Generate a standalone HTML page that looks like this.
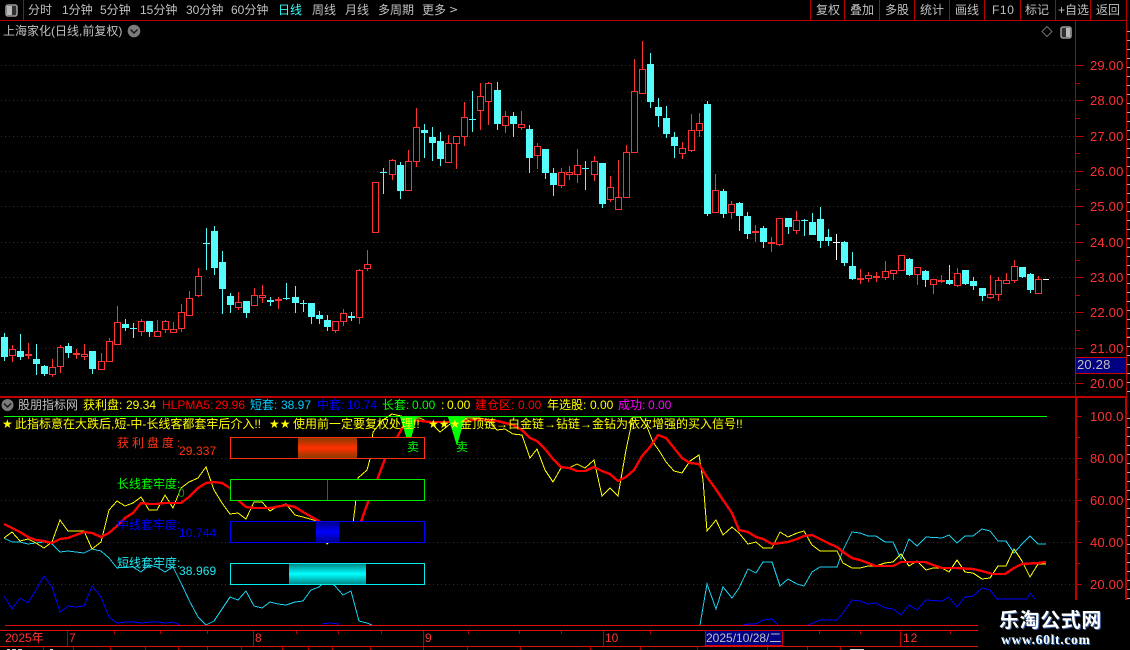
<!DOCTYPE html>
<html>
<head>
<meta charset="utf-8">
<style>
html,body{margin:0;padding:0;background:#000;}
#p{position:relative;width:1130px;height:650px;background:#000;overflow:hidden;font-family:"Liberation Sans","WenQuanYi Zen Hei","Noto Sans CJK SC",sans-serif;font-size:12px;}
#p svg{position:absolute;left:0;top:0;}
.t{position:absolute;white-space:nowrap;line-height:14px;color:#c0c0c0;}
.r{color:#ff3232}.y{color:#ffff00}.c{color:#00ccff}.b{color:#0000ff}.g{color:#00ff00}.m{color:#ff00ff}.o{color:#ff3410}
.a{color:#ff3232;font-size:13px;letter-spacing:.2px;}
</style>
</head>
<body>
<div id="p">
<svg width="1130" height="650" viewBox="0 0 1130 650">
<defs>
<linearGradient id="gr" x1="0" y1="0" x2="0" y2="1"><stop offset="0" stop-color="#8a3c00"/><stop offset=".5" stop-color="#ff3000"/><stop offset="1" stop-color="#8a3c00"/></linearGradient>
<linearGradient id="gb" x1="0" y1="0" x2="0" y2="1"><stop offset="0" stop-color="#000088"/><stop offset=".5" stop-color="#0000ff"/><stop offset="1" stop-color="#000088"/></linearGradient>
<linearGradient id="gc" x1="0" y1="0" x2="0" y2="1"><stop offset="0" stop-color="#008888"/><stop offset=".5" stop-color="#00ffff"/><stop offset="1" stop-color="#008888"/></linearGradient>
</defs>
<g shape-rendering="crispEdges" fill="none">
<path stroke="#a00000" stroke-dasharray="1 3" d="M1 65.5H1075M1 100.5H1075M1 136.5H1075M1 171.5H1075M1 206.5H1075M1 242.5H1075M1 277.5H1075M1 312.5H1075M1 348.5H1075M1 383.5H1075M1 458.5H1075M1 500.5H1075M1 542.5H1075M1 584.5H1075"/>
<!-- cyan wicks -->
<path stroke="#54fcfc" d="M4.5 333V361M20.5 334V360M36.5 344V375M44.5 365V376M68.5 343V358M92.5 351V374M125.5 319V331M133.5 323V338M149.5 321V337M206.5 228V270M214.5 226V275M222.5 251V314M230.5 293V313M246.5 301V318M270.5 297V306M286.5 283V300M295.5 286V313M303.5 300V312M311.5 303V324M319.5 311V324M327.5 315V331M351.5 312V321M383.5 168V194M400.5 162V199M424.5 124V158M432.5 127V161M440.5 132V166M472.5 91V132M497.5 82V130M513.5 112V137M529.5 125V173M545.5 149V179M553.5 168V196M585.5 161V190M602.5 163V208M650.5 53V108M658.5 98V127M666.5 106V138M674.5 132V158M707.5 101V216M723.5 189V218M739.5 202V231M747.5 212V239M763.5 226V248M788.5 218V234M804.5 219V236M812.5 213V235M820.5 207V248M828.5 229V246M844.5 241V266M852.5 252V280M909.5 258V276M925.5 270V287M949.5 265V285M965.5 270V285M973.5 277V290M982.5 288V301M1022.5 267V278M1030.5 273V293"/>
<!-- cyan bodies -->
<path fill="#54fcfc" d="M1 337h7v20h-7zM17 351h7v6h-7zM33 359h7v5h-7zM41 366h7v8h-7zM65 346h7v7h-7zM89 351h7v18h-7zM122 324h7v4h-7zM130 328h7v1h-7zM146 321h7v11h-7zM203 243h7v1h-7zM211 231h7v37h-7zM219 262h7v27h-7zM227 296h7v9h-7zM243 301h7v12h-7zM267 300h7v2h-7zM283 298h7v1h-7zM292 297h7v6h-7zM300 303h7v1h-7zM308 303h7v14h-7zM316 315h7v4h-7zM324 320h7v7h-7zM348 316h7v2h-7zM380 172h7v1h-7zM397 165h7v26h-7zM421 130h7v3h-7zM429 137h7v6h-7zM437 141h7v18h-7zM469 119h7v1h-7zM494 90h7v34h-7zM510 116h7v8h-7zM526 129h7v29h-7zM542 149h7v24h-7zM550 173h7v12h-7zM582 168h7v1h-7zM599 163h7v41h-7zM647 64h7v38h-7zM655 107h7v9h-7zM663 118h7v16h-7zM671 137h7v9h-7zM704 104h7v110h-7zM720 191h7v23h-7zM736 203h7v13h-7zM744 216h7v18h-7zM760 228h7v14h-7zM785 218h7v9h-7zM801 220h7v1h-7zM809 222h7v13h-7zM817 219h7v22h-7zM825 237h7v4h-7zM841 242h7v21h-7zM849 266h7v13h-7zM906 259h7v16h-7zM922 271h7v9h-7zM946 280h7v4h-7zM962 270h7v14h-7zM970 281h7v5h-7zM979 288h7v8h-7zM1019 267h7v10h-7zM1027 274h7v16h-7z"/>
<!-- red wicks -->
<path stroke="#ff3232" d="M12.5 345V362M28.5 343V359M52.5 359V377M60.5 345V373M76.5 349V359M84.5 344V360M101.5 353V370M109.5 338V362M117.5 306V345M141.5 319V336M157.5 320V337M165.5 320V333M173.5 322V333M181.5 304V332M189.5 291V316M198.5 268V297M238.5 292V310M254.5 288V306M262.5 285V303M278.5 297V309M335.5 321V333M343.5 309V326M359.5 269V324M367.5 250V271M375.5 182V233M392.5 159V180M408.5 150V191M416.5 108V167M448.5 135V163M456.5 136V169M464.5 102V146M480.5 83V130M488.5 82V125M505.5 111V133M521.5 111V130M537.5 143V169M561.5 168V188M569.5 166V180M577.5 149V183M594.5 156V181M610.5 176V202M618.5 160V210M626.5 145V198M634.5 59V153M642.5 41V94M682.5 142V159M691.5 114V152M699.5 113V137M715.5 174V213M731.5 201V219M755.5 225V242M771.5 237V252M779.5 218V246M796.5 211V234M860.5 269V284M868.5 272V282M876.5 272V282M885.5 261V280M893.5 270V280M901.5 255V271M917.5 267V285M933.5 279V294M941.5 275V283M957.5 268V287M990.5 275V299M998.5 277V301M1006.5 273V284M1014.5 260V283M1038.5 276V294"/>
<!-- red bodies -->
<path stroke="#ff3232" fill="#000" d="M9.5 349.5h6v6h-6zM25.5 354.5h6v1h-6zM49.5 367.5h6v7h-6zM57.5 347.5h6v19h-6zM73.5 353.5h6v1h-6zM81.5 354.5h6v2h-6zM98.5 361.5h6v8h-6zM106.5 341.5h6v20h-6zM114.5 322.5h6v22h-6zM138.5 321.5h6v10h-6zM154.5 331.5h6v5h-6zM162.5 321.5h6v8h-6zM170.5 329.5h6v3h-6zM178.5 312.5h6v16h-6zM186.5 298.5h6v17h-6zM195.5 276.5h6v19h-6zM235.5 302.5h6v5h-6zM251.5 295.5h6v10h-6zM259.5 295.5h6v2h-6zM275.5 299.5h6v1h-6zM332.5 321.5h6v9h-6zM340.5 313.5h6v8h-6zM356.5 270.5h6v47h-6zM364.5 264.5h6v4h-6zM372.5 182.5h6v50h-6zM389.5 160.5h6v14h-6zM405.5 161.5h6v29h-6zM413.5 127.5h6v34h-6zM445.5 143.5h6v19h-6zM453.5 136.5h6v7h-6zM461.5 117.5h6v19h-6zM477.5 96.5h6v14h-6zM485.5 83.5h6v18h-6zM502.5 116.5h6v9h-6zM518.5 124.5h6v3h-6zM534.5 146.5h6v9h-6zM558.5 172.5h6v13h-6zM566.5 172.5h6v2h-6zM574.5 165.5h6v9h-6zM591.5 161.5h6v13h-6zM607.5 187.5h6v12h-6zM615.5 197.5h6v12h-6zM623.5 152.5h6v45h-6zM631.5 91.5h6v61h-6zM639.5 69.5h6v24h-6zM679.5 148.5h6v5h-6zM688.5 130.5h6v20h-6zM696.5 123.5h6v7h-6zM712.5 190.5h6v22h-6zM728.5 204.5h6v8h-6zM752.5 231.5h6v1h-6zM768.5 242.5h6v1h-6zM776.5 218.5h6v26h-6zM793.5 220.5h6v10h-6zM857.5 278.5h6v1h-6zM865.5 275.5h6v3h-6zM873.5 276.5h6v1h-6zM882.5 271.5h6v6h-6zM890.5 270.5h6v3h-6zM898.5 255.5h6v15h-6zM914.5 267.5h6v7h-6zM930.5 279.5h6v5h-6zM938.5 280.5h6v1h-6zM954.5 273.5h6v12h-6zM987.5 294.5h6v3h-6zM995.5 280.5h6v14h-6zM1003.5 280.5h6v3h-6zM1011.5 266.5h6v14h-6zM1035.5 279.5h6v14h-6z"/>
<!-- white -->
<path stroke="#fff" d="M836.5 234V260M833 242.5h7M1043 279.5h6"/>
<!-- lines -->
<polyline stroke="#0000ff" points="4,596 12,609 20,598 28,603 36,590 44,576 52,587 60,612 68,606 76,607 84,606 92,586 101,597 109,617 117,623 125,622 133,622 141,623 149,622 157,622 165,623 173,622 180,625"/>
<polyline stroke="#0000ff" points="322,624 328,623 339,624"/>
<polyline stroke="#0000ff" points="743,625 748,624 756,624 763,620 772,619 778,625"/>
<polyline stroke="#0000ff" points="808,625 820,620 837,620 843,613 852,600 860,601 868,604 876,603 885,608 893,609 901,615 909,605 917,610 926,600 942,601 949,597 957,607 965,597 973,596 982,588 990,590 997,599 1027,599 1030,593 1035,599"/>
<polyline stroke="#18d0ee" points="4,538 12,542 20,542 28,544 36,543 44,542 52,544 60,552 68,551 76,552 84,553 92,549 101,551 109,558 117,568 125,567 133,567 141,572 149,565 157,567 165,572 173,567 181,583 189,600 198,617 206,625 214,621 222,609 230,597 238,600 246,591 254,606 262,608 270,602 278,604 286,605 295,602 303,601 311,590 319,587 327,580 335,586 343,595 351,591 359,621 367,623 372,625"/>
<polyline stroke="#18d0ee" points="700,625 707,584 716,609 723,587 732,598 739,588 748,569 756,573 763,562 772,562 780,586 788,579 797,584 804,586 812,572 820,567 837,567 843,550 852,532 860,533 868,536 876,536 885,542 893,542 901,559 909,539 917,546 926,537 942,538 949,535 957,543 965,536 973,536 982,529 990,531 998,541 1006,541 1014,553 1022,544 1030,536 1038,544 1046,544"/>
<polyline stroke="#ffff00" points="4,538 12,532 20,541 28,539 36,543 44,548 52,542 60,520 68,531 76,531 84,531 92,549 101,542 107,518 109,510 117,501 125,506 133,503 141,497 149,510 157,510 165,495 173,508 181,488 189,482 198,478 206,467 214,490 222,503 230,514 238,513 246,519 254,502 262,502 270,511 278,506 286,504 295,515 303,517 317,521 327,544 340,530 353,523 355,508 358,478 367,470 370,459 373,432 383,420 392,414 410,418 420,418 432,424 440,432 450,424 460,418 480,418 490,422 497,430 505,429 513,434 522,435 530,458 537,449 545,470 553,482 561,468 569,468 577,464 585,468 594,460 602,496 610,488 618,496 626,450 633,417 640,417 647,427 653,442 660,452 666,462 674,471 682,473 690,461 699,455 703,480 707,531 716,520 723,535 732,527 739,533 748,544 756,542 763,548 772,548 780,532 788,537 797,533 804,531 812,545 820,551 837,551 843,563 852,568 860,568 868,566 876,566 885,563 893,562 901,554 909,566 917,561 926,570 933,568 942,568 949,572 957,560 965,572 973,573 982,579 990,578 998,566 1006,566 1014,549 1022,561 1030,577 1038,564 1046,564"/>
<polyline stroke="#ff0000" stroke-width="2.4" stroke-linejoin="round" points="4,524 20,532 28,537 36,540 44,541 52,543 60,539 68,538 76,535 84,532 92,533 101,537 109,533 117,526 125,518 133,513 141,503 149,504 157,504 165,503 181,503 189,497 198,488 206,483 214,482 222,483 230,488 238,500 246,507 254,508 270,508 286,505 295,507 303,512 317,520 340,535 355,535 362,519 368,502 377,480 385,459 400,432 405,423 413,420 430,422 460,422 480,419 497,421 513,425 522,430 530,438 537,441 545,449 553,459 561,467 569,468 577,471 585,471 594,467 602,471 610,474 618,481 626,477 634,470 642,456 650,447 658,435 666,438 674,448 682,458 690,463 699,464 707,477 715,488 723,500 732,513 739,530 748,532 756,537 763,539 772,544 780,543 788,542 797,539 804,536 812,535 820,539 828,543 837,547 843,552 852,558 860,560 868,563 876,566 893,566 901,562 909,562 925,562 933,565 942,568 957,568 973,569 982,571 992,574 1005,574 1014,568 1022,564 1038,563 1046,562"/>
<!-- signal triangles -->
<path fill="#00ff00" d="M400 417H417L409 446zM448 417H465L457 446z"/>
<!-- boxes -->
<rect x="230.5" y="437.5" width="194" height="21" stroke="#ff3010" fill="#000"/>
<rect x="298" y="438" width="59" height="20" fill="url(#gr)" shape-rendering="auto"/>
<rect x="230.5" y="479.5" width="194" height="21" stroke="#00e800" fill="#000"/>
<path stroke="#008800" d="M327.5 480V500"/>
<rect x="230.5" y="521.5" width="194" height="21" stroke="#0000ff" fill="#000"/>
<rect x="316" y="522" width="23" height="20" fill="url(#gb)" shape-rendering="auto"/>
<rect x="230.5" y="563.5" width="194" height="21" stroke="#00eeee" fill="#000"/>
<rect x="289" y="564" width="77" height="20" fill="url(#gc)" shape-rendering="auto"/>
<!-- frame -->
<path stroke="#00ff00" d="M4 416.5H1047"/>
<path stroke="#b40000" d="M0 20.5H1126M23.5 0V20M810.5 0V20M844.5 0V20M879.5 0V20M914.5 0V20M949.5 0V20M984.5 0V20M1020.5 0V20M1055.5 0V20M1090.5 0V20M1075.5 21V396M1126.5 0V396"/>
<path stroke="#b40000" d="M1076 65.5h8M1076 83.5h4M1076 100.5h8M1076 118.5h4M1076 136.5h8M1076 153.5h4M1076 171.5h8M1076 189.5h4M1076 206.5h8M1076 224.5h4M1076 242.5h8M1076 260.5h4M1076 277.5h8M1076 295.5h4M1076 312.5h8M1076 330.5h4M1076 348.5h8M1076 383.5h8M1077 416.5h5M1077 437.5h3M1077 458.5h5M1077 479.5h3M1077 500.5h5M1077 521.5h3M1077 542.5h5M1077 563.5h3M1077 584.5h5M1127 239.5h3M1127 336.5h3"/>
<path stroke="#c00000" stroke-width="2" d="M0 397H1127M1076 397V600M1126 397V600"/>
<path stroke="#a8a8a8" stroke-dasharray="1 8" stroke-width="3" d="M1128.5 211V396"/>
<path stroke="#a8a8a8" stroke-dasharray="1 8" stroke-width="3" d="M1128.5 31V207M1128.5 418V600"/>
<path stroke="#dd1010" d="M5 625.5H978M0 630.5H978M0 646.5H978"/>
<path stroke="#b00000" d="M67.5 631V646M253.5 631V646M423.5 631V646M603.5 631V646M900.5 631V646M114.5 631v3M160.5 631v3M207.5 631v3M296.5 631v3M338.5 631v3M381.5 631v3M468.5 631v3M519.5 631v3M561.5 631v3M650.5 631v3M819.5 631v3M860.5 631v3M950.5 631v3"/>
<path stroke="#b00000" d="M43.5 647v3M73.5 647v3M110.5 647v3M145.5 647v3M178.5 647v3M207.5 647v3M241.5 647v3M282.5 647v3M308.5 647v3M332.5 647v3M370.5 647v3M423.5 647v3M467.5 647v3M520.5 647v3M590.5 647v3M640.5 647v3M697.5 647v3M767.5 647v3M807.5 647v3M840.5 647v3"/>
<path stroke="#d0d0d0" d="M7 649.5h3M12 649.5h4M18 649.5h4M50 649.5h3M850 649.5h14"/>
<rect x="705.5" y="630.5" width="77" height="15" fill="#000080" stroke="#d00000"/>
<rect x="1075.5" y="357.5" width="51" height="16" fill="#000080" stroke="#c80000"/>
<rect x="978" y="600" width="152" height="50" fill="#000"/>
</g>
<!-- icons -->
<g>
<rect x="6" y="5" width="11" height="11" rx="2" fill="#303030" stroke="#9a9a9a" stroke-width="1.6"/>
<rect x="7" y="6" width="5" height="9" fill="#b8b8b8"/>
<rect x="1061" y="27" width="10" height="11" rx="2" fill="#303030" stroke="#9a9a9a" stroke-width="1.6"/>
<rect x="1066" y="28" width="4" height="9" fill="#b8b8b8"/>
<path d="M1047 26.5L1052 31.5L1047 36.5L1042 31.5Z" fill="none" stroke="#707070"/>
<circle cx="134" cy="31" r="6.3" fill="#7c7c7c"/>
<path d="M130.5 29.5L134 33L137.5 29.5" fill="none" stroke="#1a1a1a" stroke-width="1.5"/>
<circle cx="7.5" cy="405" r="6" fill="#7c7c7c"/>
<path d="M4 403.5L7.5 407L11 403.5" fill="none" stroke="#1a1a1a" stroke-width="1.5"/>
</g>
</svg>

<span class="t" style="left:28px;top:3px">分时</span>
<span class="t" style="left:62px;top:3px">1分钟</span>
<span class="t" style="left:100px;top:3px">5分钟</span>
<span class="t" style="left:140px;top:3px">15分钟</span>
<span class="t" style="left:186px;top:3px">30分钟</span>
<span class="t" style="left:231px;top:3px">60分钟</span>
<span class="t" style="left:278px;top:3px;color:#33ffff">日线</span>
<span class="t" style="left:312px;top:3px">周线</span>
<span class="t" style="left:345px;top:3px">月线</span>
<span class="t" style="left:378px;top:3px">多周期</span>
<span class="t" style="left:422px;top:3px">更多</span>
<span class="t" style="left:449px;top:3px;font-family:'DejaVu Sans',sans-serif;font-size:11px">&gt;</span>
<span class="t" style="left:816px;top:3px">复权</span>
<span class="t" style="left:850px;top:3px">叠加</span>
<span class="t" style="left:885px;top:3px">多股</span>
<span class="t" style="left:920px;top:3px">统计</span>
<span class="t" style="left:955px;top:3px">画线</span>
<span class="t" style="left:992px;top:3px;letter-spacing:.6px">F10</span>
<span class="t" style="left:1025px;top:3px">标记</span>
<span class="t" style="left:1058px;top:3px">+自选</span>
<span class="t" style="left:1096px;top:3px">返回</span>
<span class="t" style="left:3px;top:24px">上海家化(日线,前复权)</span>

<span class="t a" style="left:1090px;top:59px">29.00</span>
<span class="t a" style="left:1090px;top:94px">28.00</span>
<span class="t a" style="left:1090px;top:130px">27.00</span>
<span class="t a" style="left:1090px;top:165px">26.00</span>
<span class="t a" style="left:1090px;top:200px">25.00</span>
<span class="t a" style="left:1090px;top:236px">24.00</span>
<span class="t a" style="left:1090px;top:271px">23.00</span>
<span class="t a" style="left:1090px;top:306px">22.00</span>
<span class="t a" style="left:1090px;top:342px">21.00</span>
<span class="t a" style="left:1090px;top:377px">20.00</span>
<span class="t" style="left:1077px;top:358px;font-size:13px;letter-spacing:.2px">20.28</span>
<span class="t a" style="left:1090px;top:410px">100.0</span>
<span class="t a" style="left:1090px;top:452px">80.00</span>
<span class="t a" style="left:1090px;top:494px">60.00</span>
<span class="t a" style="left:1090px;top:536px">40.00</span>
<span class="t a" style="left:1090px;top:578px">20.00</span>

<span class="t" style="left:18px;top:398px">股朋指标网</span>
<span class="t y" style="left:83px;top:398px">获利盘:</span><span class="t y" style="left:126px;top:398px">29.34</span>
<span class="t r" style="left:162px;top:398px;color:#ff0000">HLPMA5:</span><span class="t r" style="left:215px;top:398px;color:#ff0000">29.96</span>
<span class="t c" style="left:250px;top:398px">短套:</span><span class="t c" style="left:281px;top:398px">38.97</span>
<span class="t b" style="left:317px;top:398px">中套:</span><span class="t b" style="left:347px;top:398px">10.74</span>
<span class="t g" style="left:382px;top:398px">长套:</span><span class="t g" style="left:412px;top:398px">0.00</span>
<span class="t y" style="left:441px;top:398px">:</span><span class="t y" style="left:447px;top:398px">0.00</span>
<span class="t r" style="left:475px;top:398px;color:#ff0000">建仓区:</span><span class="t r" style="left:518px;top:398px;color:#ff0000">0.00</span>
<span class="t y" style="left:547px;top:398px">年选股:</span><span class="t y" style="left:590px;top:398px">0.00</span>
<span class="t m" style="left:618px;top:398px">成功:</span><span class="t m" style="left:648px;top:398px">0.00</span>

<span class="t y" style="left:2px;top:417px;font-family:'DejaVu Sans',sans-serif;font-size:12px">★</span>
<span class="t y" style="left:15px;top:417px">此指标意在大跌后,短-中-长线客都套牢后介入!!</span>
<span class="t y" style="left:269px;top:417px;font-family:'DejaVu Sans',sans-serif;font-size:12px">★★</span>
<span class="t y" style="left:293px;top:417px">使用前一定要复权处理!!</span>
<span class="t y" style="left:428px;top:417px;font-family:'DejaVu Sans',sans-serif;font-size:12px">★★★</span>
<span class="t y" style="left:460px;top:417px">金顶链→白金链→钻链→金钻为依次增强的买入信号!!</span>

<span class="t g" style="left:407px;top:440px">卖</span>
<span class="t g" style="left:456px;top:440px">卖</span>

<span class="t o" style="left:117px;top:436px;letter-spacing:3px">获利盘度:</span>
<span class="t o" style="left:179px;top:444px;letter-spacing:.1px">29.337</span>
<span class="t g" style="left:117px;top:477px">长线套牢度:</span>
<span class="t" style="left:178px;top:486px;color:#00a000">0</span>
<span class="t b" style="left:117px;top:518px">中线套牢度:</span>
<span class="t b" style="left:179px;top:526px;letter-spacing:.1px">10.744</span>
<span class="t" style="left:117px;top:556px;color:#22e8f0">短线套牢度:</span>
<span class="t" style="left:179px;top:564px;color:#22e8f0;letter-spacing:.1px">38.969</span>

<span class="t" style="left:5px;top:631px;color:#ff3232">2025年</span>
<span class="t" style="left:69px;top:631px;color:#ff3232">7</span>
<span class="t" style="left:255px;top:631px;color:#ff3232">8</span>
<span class="t" style="left:425px;top:631px;color:#ff3232">9</span>
<span class="t" style="left:605px;top:631px;color:#ff3232">10</span>
<span class="t" style="left:903px;top:631px;color:#ff3232;letter-spacing:1px">12</span>
<span class="t" style="left:706px;top:631px">2025/10/28/二</span>

<span class="t" style="left:999px;top:608px;line-height:22px;color:#fff;font-family:'Noto Sans CJK SC',sans-serif;font-weight:700;font-size:20px;letter-spacing:.6px;text-shadow:1px 1px 0 #3a5fa0">乐淘公式网</span>
<span class="t" style="left:1001px;top:632px;line-height:16px;color:#fff;font-family:'Liberation Serif',serif;font-weight:700;font-size:13.5px;letter-spacing:.7px;text-shadow:1px 1px 0 #2a6fc0">www.60lt.com</span>
</div>
</body>
</html>
